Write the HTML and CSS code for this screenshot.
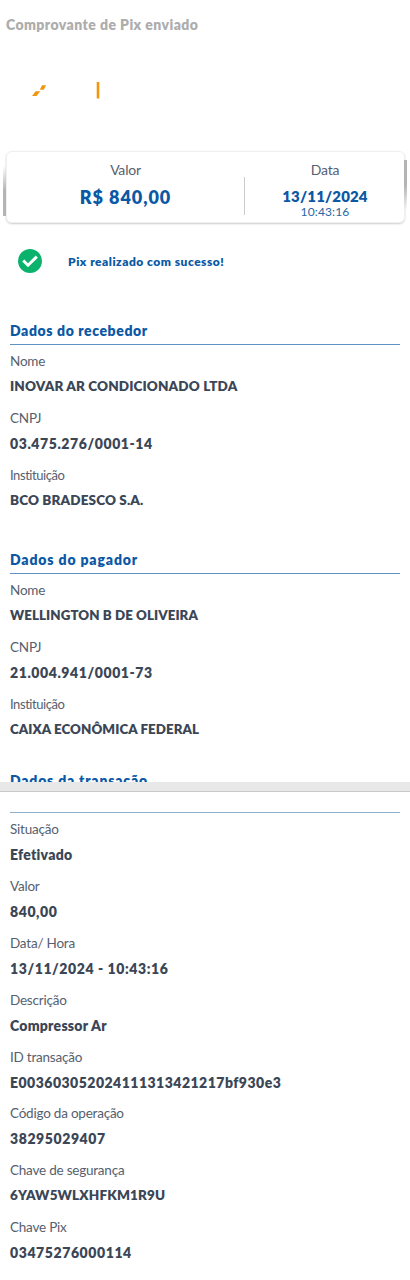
FILE: index.html
```html
<!DOCTYPE html>
<html lang="pt-BR">
<head>
    <meta charset="UTF-8">
    <meta name="viewport" content="width=device-width, initial-scale=1.0">
    <title>Comprovante de Pix enviado</title>
    <link rel="stylesheet" href="styles.css">
</head>
<body>
    <div class="page page-first">
        <header>
            <h1>Comprovante de Pix enviado</h1>
            <svg class="logo" width="72" height="20" viewBox="0 0 72 20">
                <path d="M0 16 L3.6 11.2 H8.3 L4.6 16 Z M7.8 9.8 L10 5.2 H14 L11.8 9.8 Z" fill="#f0970f"/>
                <rect x="64.7" y="2" width="2.6" height="16.5" fill="#f0970f"/>
            </svg>
        </header>
        <div class="summary">
            <div class="amount">
                <p class="label">Valor</p>
                <p class="total">R$ 840,00</p>
            </div>
            <div class="when">
                <p class="label">Data</p>
                <p class="day">13/11/2024</p>
                <p class="hour">10:43:16</p>
            </div>
        </div>
        <div class="status">
            <svg width="24" height="24" viewBox="0 0 24 24">
                <circle cx="12" cy="12" r="12" fill="#0ab26c"/>
                <path d="M5.2 11.5 L10 16.2 L18.8 7.6" fill="none" stroke="#fff" stroke-width="3"/>
            </svg>
            <p>Pix realizado com sucesso!</p>
        </div>
        <section>
            <h2>Dados do recebedor</h2>
            <dl>
                <dt>Nome</dt>
                <dd class="caps">INOVAR AR CONDICIONADO LTDA</dd>
                <dt>CNPJ</dt>
                <dd>03.475.276/0001-14</dd>
                <dt class="tight">Instituição</dt>
                <dd class="caps">BCO BRADESCO S.A.</dd>
            </dl>
        </section>
        <section class="payer">
            <h2>Dados do pagador</h2>
            <dl>
                <dt>Nome</dt>
                <dd class="caps narrow">WELLINGTON B DE OLIVEIRA</dd>
                <dt>CNPJ</dt>
                <dd>21.004.941/0001-73</dd>
                <dt class="tight">Instituição</dt>
                <dd class="caps narrow">CAIXA ECONÔMICA FEDERAL</dd>
            </dl>
        </section>
        <h2 class="cut">Dados da transação</h2>
    </div>
    <div class="page-break"></div>
    <div class="page page-second">
        <dl>
            <dt>Situação</dt>
            <dd class="word">Efetivado</dd>
            <dt>Valor</dt>
            <dd>840,00</dd>
            <dt>Data/ Hora</dt>
            <dd>13/11/2024 - 10:43:16</dd>
            <dt>Descrição</dt>
            <dd class="word">Compressor Ar</dd>
            <dt>ID transação</dt>
            <dd class="id">E003603052024111313421217bf930e3</dd>
            <dt>Código da operação</dt>
            <dd>38295029407</dd>
            <dt>Chave de segurança</dt>
            <dd class="caps">6YAW5WLXHFKM1R9U</dd>
            <dt>Chave Pix</dt>
            <dd>03475276000114</dd>
        </dl>
    </div>
</body>
</html>
```

FILE: styles.css
```css
body {
    margin: 0;
    padding: 0;
    background-color: #fff;
    color: #3b4656;
    font-family: Futura, Lato, sans-serif;
    font-size: 14px;
    font-variant-ligatures: none;
}

h1, h2, p, dl, dt, dd {
    margin: 0;
}

svg {
    display: block;
}

.page {
    overflow: hidden;
}

.page-first {
    height: 782px;
}

header {
    height: 151px;
}

h1 {
    padding: 15px 6px 0;
    font-size: 14px;
    line-height: 20px;
    font-weight: 800;
    letter-spacing: 0.43px;
    color: #adadad;
}

.logo {
    margin: 45px 0 0 32px;
}

.summary {
    position: relative;
    display: flex;
    height: 70px;
    margin: 0 5px 0 6px;
    border: 1px solid #efefef;
    border-radius: 6px;
    box-shadow: 0 1px 2px rgba(0, 0, 0, 0.2);
    text-align: center;
}

.summary::before,
.summary::after {
    content: "";
    position: absolute;
    width: 3px;
}

.summary::before {
    left: -4px;
    top: 14px;
    height: 50px;
    background: linear-gradient(rgba(180, 180, 180, 0), #b4b4b4 50%);
}

.summary::after {
    right: -3px;
    top: 8px;
    height: 50px;
    background: linear-gradient(#b4b4b4 50%, rgba(180, 180, 180, 0));
}

.amount {
    width: 237px;
}

.when {
    flex: 1;
    padding-left: 2px;
    background: linear-gradient(#ccc, #ccc) no-repeat 0 25px / 1px 38px;
}

.label {
    padding-top: 8px;
    line-height: 20px;
    letter-spacing: -0.2px;
}

.total {
    padding-top: 4px;
    font-size: 18px;
    line-height: 26px;
    font-weight: 800;
    letter-spacing: 0.95px;
    color: #0b58a5;
}

.day {
    padding-top: 7px;
    font-size: 15px;
    line-height: 18px;
    font-weight: 800;
    letter-spacing: 0.15px;
    color: #0b58a5;
}

.hour {
    font-size: 12px;
    line-height: 14px;
    letter-spacing: 0.15px;
    color: #2767a5;
}

.status {
    display: flex;
    align-items: center;
    gap: 26px;
    margin: 26px 0 47px 18px;
    font-size: 12px;
    line-height: 16px;
    font-weight: 800;
    letter-spacing: 0.5px;
    color: #0b58a5;
}

.status p {
    padding-top: 2px;
}

section {
    height: 229px;
    padding: 0 10px;
}

.payer {
    height: 221px;
}

h2 {
    height: 23px;
    padding-top: 1px;
    font-size: 14px;
    line-height: 19px;
    font-weight: 800;
    letter-spacing: 0.6px;
    color: #0b58a5;
}

.payer h2 {
    letter-spacing: 0.85px;
}

section h2 {
    border-bottom: 1px solid #5f93c4;
}

.cut {
    padding: 1px 10px 0;
    letter-spacing: 0.8px;
}

dl {
    padding-top: 4px;
}

dt, dd {
    line-height: 25px;
    white-space: nowrap;
}

dt {
    font-size: 13.5px;
    letter-spacing: -0.22px;
}

.tight {
    font-size: 13px;
    letter-spacing: -0.43px;
}

dd {
    height: 32px;
    font-weight: 800;
    letter-spacing: 0.58px;
}

.word {
    letter-spacing: 0.25px;
}

.id {
    letter-spacing: 0.48px;
}

.caps {
    font-size: 13.5px;
    letter-spacing: 0.14px;
}

.narrow {
    font-size: 13.3px;
    letter-spacing: 0.08px;
}

.page-break {
    height: 9px;
    background-color: #e8e8e8;
    border-bottom: 1px solid #c8c8c8;
}

.page-second {
    height: 488px;
    padding: 0 10px;
}

.page-second dl {
    margin-top: 20px;
    border-top: 1px solid #8fb0cc;
}

.page-second dd {
    height: 31.9px;
}

dt, .label {
    font-weight: 400;
    color: #56606e;
}
```
